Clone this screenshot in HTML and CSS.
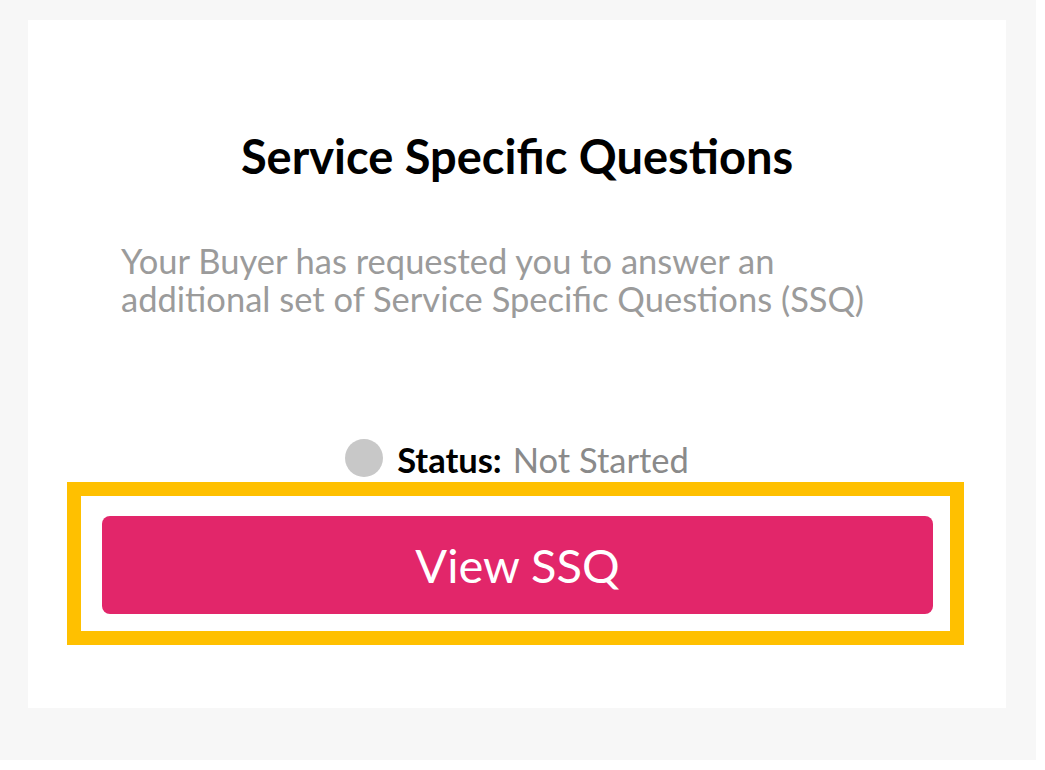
FILE: index.html
```html
<!DOCTYPE html>
<html lang="en">
<head>
  <meta charset="UTF-8" />
  <meta name="viewport" content="width=device-width, initial-scale=1.0" />
  <title>Service Specific Questions</title>
  <link rel="stylesheet" href="styles.css">
</head>
<body>
  <div class="stage">
    <div class="card">
      <h1 class="card-title">Service Specific Questions</h1>

      <p class="card-text">
        Your Buyer has requested you to answer an<br>
        additional set of Service Specific Questions (SSQ)
      </p>

      <div class="status">
        <span class="status-dot"></span>
        <span class="status-label">Status:</span>
        <span class="status-value">Not Started</span>
      </div>

      <div class="highlight">
        <a href="#" class="ssq-btn">View SSQ</a>
      </div>
    </div>
  </div>
</body>
</html>
```

FILE: styles.css
```css
body {
  margin: 0;
  background-color: #fff;
  font-family: 'Lato', 'Liberation Sans', sans-serif;
}
.stage {
  width: 1036px;
  height: 760px;
  box-sizing: border-box;
  padding: 20px 30px 52px 28px;
  background-color: #f7f7f7;
}
.card {
  height: 100%;
  background-color: #fff;
  display: flex;
  flex-direction: column;
  padding-top: 108px;
  box-sizing: border-box;
}
.card-title {
  margin: 0;
  font-size: 47px;
  line-height: 56px;
  font-weight: 700;
  color: #000;
  text-align: center;
}
.card-text {
  margin: 58px 0 0 93px;
  font-size: 34.5px;
  line-height: 38px;
  color: #9b9b9b;
}
.status {
  margin-top: 121px;
  display: flex;
  justify-content: center;
  align-items: flex-start;
  font-size: 34.5px;
  line-height: 36px;
}
.status-dot {
  width: 38px;
  height: 38px;
  margin-right: 14px;
  border-radius: 50%;
  background-color: #c8c8c8;
}
.status-label {
  margin: 3px 11px 4px 0;
  font-weight: 700;
  color: #000;
}
.status-value {
  margin: 3px 0 4px;
  color: #8a8a8a;
}
.highlight {
  margin-left: 39px;
  width: 897px;
  box-sizing: border-box;
  border: 14px solid #ffc000;
  padding: 20px 17px 17px 21px;
}
.ssq-btn {
  display: block;
  height: 98px;
  line-height: 98px;
  border-radius: 8px;
  background-color: #e2266a;
  color: #fff;
  text-align: center;
  text-decoration: none;
  font-size: 47px;
}
```
